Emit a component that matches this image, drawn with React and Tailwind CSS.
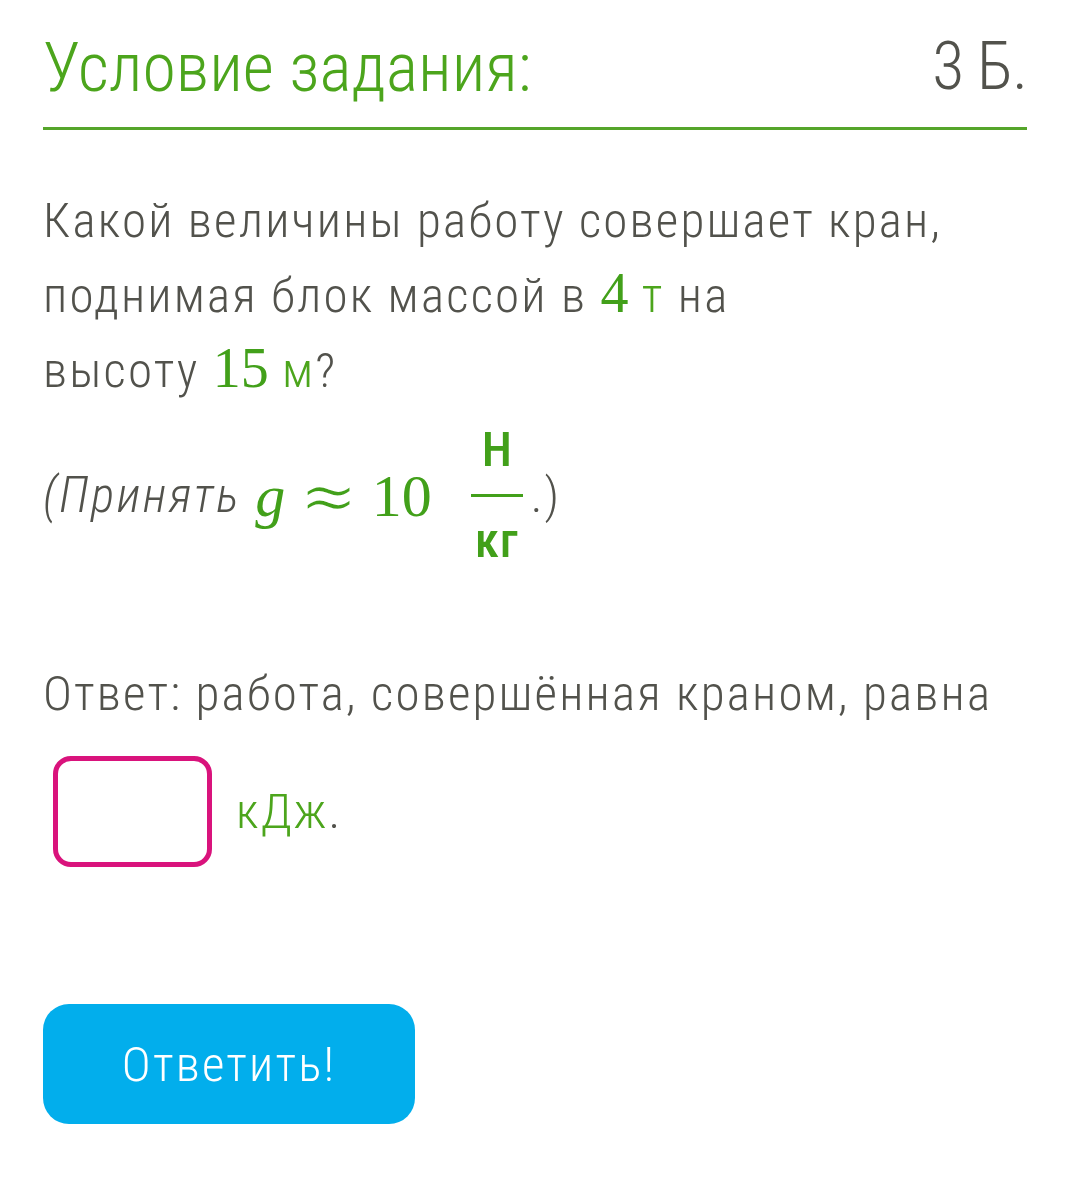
import React from 'react';

const sans = { fontFamily: "'Roboto Condensed', Roboto, 'Liberation Sans', sans-serif" };
const serif = { fontFamily: "'Liberation Serif', 'DejaVu Serif', serif" };
const dejavu = { fontFamily: "'DejaVu Sans', 'DejaVu Serif', serif" };

function Fraction() {
  return (
    <span className="ml-[39px] inline-flex flex-col items-center gap-[20px] text-[#42a01a]" style={sans}>
      <span className="text-[49px] leading-[48px] font-medium font-stretch-condensed">Н</span>
      <span className="block h-[3px] w-[52px] bg-[#42a01a]" />
      <span className="text-[49px] leading-[48px] font-medium font-stretch-condensed tracking-[1px]">кг</span>
    </span>
  );
}

export default function App() {
  return (
    <div className="min-h-screen bg-white pl-[43px] pr-[47px] text-[#52524c]" style={sans}>
      {/* Header */}
      <header className="flex items-start justify-between border-b-[3px] border-[#55a52a] pt-[34px] pb-[25px]">
        <h1 className="text-[68px] leading-none font-light font-stretch-condensed text-[#4ca51c]">
          Условие задания:
        </h1>
        <span className="text-[66px] leading-none font-light font-stretch-condensed tracking-[-1px] text-[#52524c]">
          3 Б.
        </span>
      </header>

      {/* Question */}
      <p className="mt-[55px] text-[49px] leading-[72px] font-light font-stretch-condensed tracking-[2.2px]">
        Какой величины работу совершает кран,
        <br />
        поднимая блок массой в{' '}
        <span className="text-[56px] tracking-normal text-[#42a01a]" style={serif}>4</span>{' '}
        <span className="text-[#4ca51c]">т</span> на
        <br />
        высоту <span className="text-[56px] tracking-normal text-[#42a01a]" style={serif}>15</span>{' '}
        <span className="text-[#4ca51c]">м</span>?
      </p>

      {/* g hint */}
      <div className="mt-[19px] flex items-center">
        <span className="text-[49px] leading-none font-light italic font-stretch-condensed tracking-[2.5px]">(Принять</span>
        <span className="ml-[14px] text-[60px] leading-none italic text-[#42a01a]" style={serif}>g</span>
        <span className="ml-[14px] text-[70px] leading-[60px] text-[#42a01a] [-webkit-text-stroke:2px_white]" style={dejavu}>≈</span>
        <span className="ml-[14px] text-[60px] leading-none text-[#42a01a]" style={serif}>10</span>
        <Fraction />
        <span className="ml-[8px] text-[49px] leading-none font-light font-stretch-condensed tracking-[2px]">.)</span>
      </div>

      {/* Answer */}
      <p className="mt-[93px] text-[49px] leading-[72px] font-light font-stretch-condensed tracking-[2.2px]">
        Ответ: работа, совершённая краном, равна
      </p>
      <div className="mt-[26px] flex items-center">
        <div className="ml-[10px] h-[111px] w-[159px] rounded-[18px] border-[5px] border-[#d9137c] bg-white" />
        <span className="ml-[24px] text-[49px] leading-none font-light font-stretch-condensed tracking-[2.2px]">
          <span className="text-[#4ca51c]">кДж</span>.
        </span>
      </div>

      {/* Submit */}
      <button className="mt-[137px] flex h-[120px] w-[372px] items-center justify-center rounded-[26px] bg-[#02aeec] text-[49px] leading-none font-light font-stretch-condensed tracking-[2.2px] text-white">
        Ответить!
      </button>
    </div>
  );
}
